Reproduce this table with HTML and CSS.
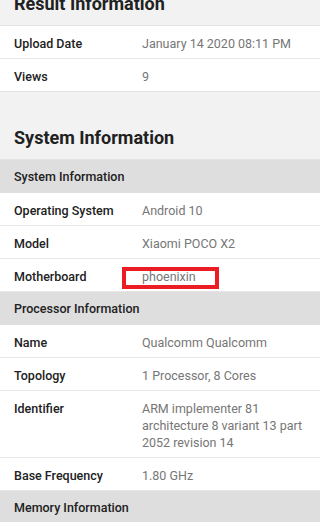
FILE: index.html
```html
<!DOCTYPE html>
<html lang="en">
<head>
<meta charset="utf-8">
<title>Result Information</title>
<link rel="stylesheet" href="styles.css">
</head>
<body>
<div class="page">
  <section class="section">
    <h2 class="heading">Result Information</h2>
    <div class="table">
      <div class="row"><div class="label">Upload Date</div><div class="value">January 14 2020 08:11 PM</div></div>
      <div class="row"><div class="label">Views</div><div class="value">9</div></div>
    </div>
  </section>
  <section class="section">
    <h2 class="heading">System Information</h2>
    <div class="table">
      <div class="group">System Information</div>
      <div class="row"><div class="label">Operating System</div><div class="value">Android 10</div></div>
      <div class="row"><div class="label">Model</div><div class="value">Xiaomi POCO X2</div></div>
      <div class="row"><div class="label">Motherboard</div><div class="value marked">phoenixin<span class="mark"></span></div></div>
      <div class="group">Processor Information</div>
      <div class="row"><div class="label">Name</div><div class="value">Qualcomm Qualcomm</div></div>
      <div class="row"><div class="label">Topology</div><div class="value">1 Processor, 8 Cores</div></div>
      <div class="row"><div class="label">Identifier</div><div class="value">ARM implementer 81 architecture 8 variant 13 part 2052 revision 14</div></div>
      <div class="row"><div class="label">Base Frequency</div><div class="value">1.80 GHz</div></div>
      <div class="group">Memory Information</div>
    </div>
  </section>
</div>
</body>
</html>
```
FILE: styles.css
```css
html, body {
  margin: 0;
  padding: 0;
  background: #f2f2f2;
}
body {
  font-family: Roboto, "Liberation Sans", Arial, sans-serif;
  color: #212121;
  overflow: hidden;
}
.page {
  margin-top: -42px;
}
.heading {
  margin: 0;
  padding: 33.5px 14px 9.5px;
  font-size: 18px;
  line-height: 24px;
  font-weight: 700;
  color: #212121;
}
.table {
  background: #fff;
  border-top: 1px solid #e2e2e2;
  border-bottom: 1px solid #e2e2e2;
}
.row {
  display: grid;
  grid-template-columns: 142px 1fr;
  padding: 8.5px 0 6.5px;
  border-bottom: 1px solid #e6e6e6;
  font-size: 12.5px;
  line-height: 17px;
}
.row:last-child {
  border-bottom: 0;
}
.label {
  padding-left: 14px;
  font-weight: 500;
  color: #212121;
}
.value {
  padding-right: 12px;
  color: #767676;
}
.group {
  background: #dedede;
  padding: 7px 14px;
  font-size: 12.5px;
  line-height: 19px;
  font-weight: 500;
  color: #212121;
}
.marked {
  position: relative;
}
.mark {
  position: absolute;
  left: -20px;
  top: -1px;
  width: 97px;
  height: 22px;
  box-sizing: border-box;
  border: 4px solid #ec1c24;
}
```
